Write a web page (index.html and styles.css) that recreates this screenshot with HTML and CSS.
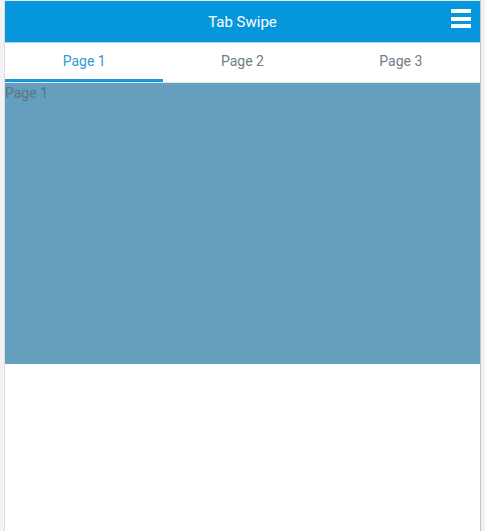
FILE: index.html
```html
<!DOCTYPE html>
<html>
<head>
<meta charset="utf-8">
<link rel="stylesheet" href="styles.css">
</head>
<body>
<div class="frame">
  <header class="bar">
    <span class="title">Tab Swipe</span>
    <button class="menu" aria-label="menu">
      <span></span><span></span><span></span>
    </button>
  </header>
  <nav class="tabs">
    <div class="tab active">Page 1</div>
    <div class="tab">Page 2</div>
    <div class="tab">Page 3</div>
  </nav>
  <section class="page">Page 1</section>
</div>
</body>
</html>
```
FILE: styles.css
```css
html, body {
  margin: 0;
  padding: 0;
  height: 100%;
}
body {
  background: #f2f2f2;
  font-family: Roboto, "Liberation Sans", Arial, sans-serif;
}
.frame {
  margin: 0 4px;
  height: 100%;
  box-sizing: border-box;
  background: #fff;
  border-left: 1px solid #dcdce4;
  border-right: 1px solid #c4c4c4;
  border-top: 1px solid #e8e8e8;
  display: flex;
  flex-direction: column;
}
.bar {
  position: relative;
  height: 41px;
  background: #0596db;
  border-bottom: 1px solid #a9d9f2;
  display: flex;
  align-items: center;
  justify-content: center;
}
.title {
  color: #fff;
  font-size: 15px;
}
.menu {
  position: absolute;
  right: 9px;
  top: 8px;
  width: 20px;
  padding: 0;
  border: 0;
  background: none;
  display: flex;
  flex-direction: column;
  gap: 3.5px;
}
.menu span {
  display: block;
  height: 4px;
  background: #fff;
}
.tabs {
  display: flex;
  height: 39px;
  border-bottom: 1px solid #e3e6ea;
}
.tab {
  flex: 1;
  display: flex;
  align-items: center;
  justify-content: center;
  font-size: 14px;
  color: #6f7c87;
  box-sizing: border-box;
  padding-bottom: 3px;
}
.tab.active {
  color: #3399d6;
  border-bottom: 3px solid #1b95dc;
  padding-bottom: 0;
}
.page {
  height: 281px;
  background: #659fbe;
  color: #5a7484;
  font-size: 14px;
  padding-top: 2px;
  box-sizing: border-box;
}
```
